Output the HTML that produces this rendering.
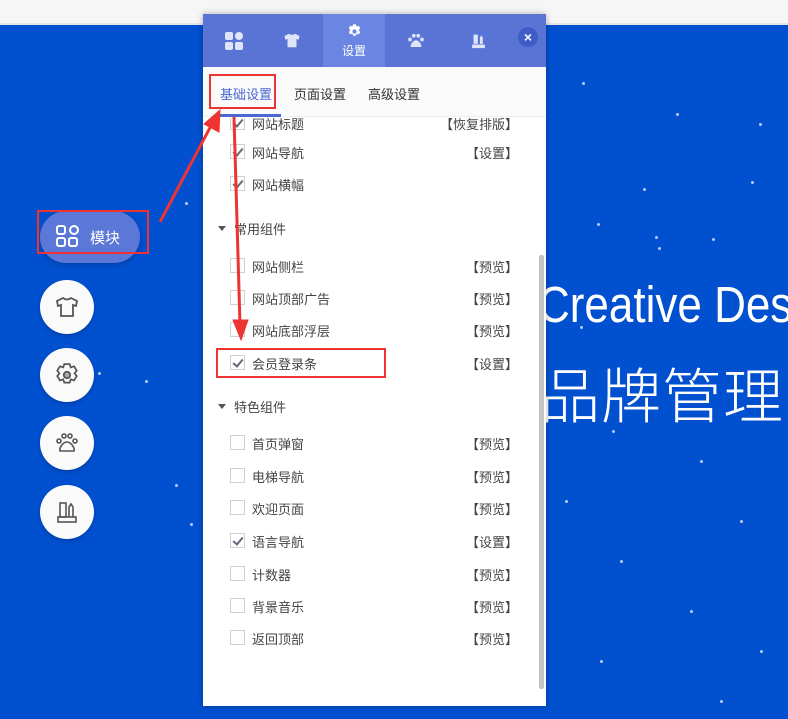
<!DOCTYPE html>
<html><head><meta charset="utf-8"><style>
*{margin:0;padding:0;box-sizing:border-box}
body{width:788px;height:719px;overflow:hidden;position:relative;background:#0050d0;font-family:"Liberation Sans","Noto Sans CJK SC",sans-serif}
.top{position:absolute;left:0;top:0;width:788px;height:25px;background:#f6f6f6;border-bottom:2px solid #e6e6e6}
.star{position:absolute;width:3px;height:3px;border-radius:50%;background:#b8c8f0}
.panel{position:absolute;left:203px;top:14px;width:343px;height:692px;background:#fff;box-shadow:0 0 6px rgba(0,0,0,.3)}
.hd{position:absolute;left:0;top:0;width:343px;height:53px;background:#5a74d6}
.tab{position:absolute;top:0;height:53px;width:62px;display:flex;align-items:center;justify-content:center;flex-direction:column}
.tab.act{background:#6b86e2;color:#fff;font-size:12px}
.close{position:absolute;left:315px;top:13px;width:20px;height:20px;border-radius:50%;background:#3f5cc8;color:#fff;font-size:14px;line-height:20px;text-align:center;font-weight:bold}
.tabs{position:absolute;left:0;top:53px;width:343px;height:50px;background:#fafafa;border-bottom:1px solid #eee;font-size:13px;color:#333}
.tabs span{position:absolute;top:17px}
.row{position:absolute;left:0;width:343px;height:20px;font-size:13px;color:#444}
.cb{position:absolute;left:27px;top:2px;width:15px;height:15px;border:1px solid #d0d0d0;background:#fff}
.cb.c:after{content:"";position:absolute;left:4px;top:1px;width:4px;height:8px;border:solid #667;border-width:0 2px 2px 0;transform:rotate(40deg)}
.row .t{position:absolute;left:49px;top:1px}
.row .r{position:absolute;right:28px;top:1px;color:#444}
.sec{position:absolute;left:15px;font-size:13px;color:#444}
.sec:before{content:"";display:inline-block;border:4px solid transparent;border-top:5px solid #555;margin-right:8px;vertical-align:-1px}
.sb{position:absolute;left:336px;top:241px;width:5px;height:434px;background:#c4c4c4;border-radius:2px}
.circ{position:absolute;left:40px;width:54px;height:54px;border-radius:50%;background:#fafafa;box-shadow:0 2px 5px rgba(0,0,0,.2);display:flex;align-items:center;justify-content:center}
.red{position:absolute;border:2px solid #ee3333}
.hero{position:absolute;left:530px;top:260px;width:258px;height:180px;overflow:hidden}
</style></head><body>
<div class="top"></div>
<div class="star" style="left:582px;top:82px"></div><div class="star" style="left:676px;top:113px"></div><div class="star" style="left:759px;top:123px"></div><div class="star" style="left:643px;top:188px"></div><div class="star" style="left:655px;top:236px"></div><div class="star" style="left:751px;top:181px"></div><div class="star" style="left:712px;top:238px"></div><div class="star" style="left:658px;top:247px"></div><div class="star" style="left:597px;top:223px"></div><div class="star" style="left:185px;top:202px"></div><div class="star" style="left:98px;top:372px"></div><div class="star" style="left:145px;top:380px"></div><div class="star" style="left:175px;top:484px"></div><div class="star" style="left:190px;top:523px"></div><div class="star" style="left:580px;top:326px"></div><div class="star" style="left:612px;top:430px"></div><div class="star" style="left:700px;top:460px"></div><div class="star" style="left:740px;top:520px"></div><div class="star" style="left:620px;top:560px"></div><div class="star" style="left:690px;top:610px"></div><div class="star" style="left:760px;top:650px"></div><div class="star" style="left:600px;top:660px"></div><div class="star" style="left:720px;top:700px"></div><div class="star" style="left:565px;top:500px"></div>
<div class="hero">
<div style="position:absolute;left:8px;top:17px;color:#fff;font-size:44px;white-space:nowrap;transform:scaleY(1.15);transform-origin:0 0">Creative Design</div>
<div style="position:absolute;left:10px;top:89px;color:#fff;font-size:60px;font-weight:300;white-space:nowrap;letter-spacing:1px;font-family:'Noto Sans CJK SC',sans-serif">品牌管理</div>
</div>

<div style="position:absolute;left:40px;top:211px;width:100px;height:52px;border-radius:26px;background:#5b78d8;box-shadow:0 2px 6px rgba(0,0,0,.2)"></div>
<svg style="position:absolute;left:56px;top:225px" width="23" height="23" viewBox="0 0 23 23" fill="none" stroke="#fff" stroke-width="2"><rect x="1" y="1" width="8" height="8" rx="2"/><circle cx="18" cy="5" r="4"/><rect x="1" y="13" width="8" height="8" rx="2"/><rect x="13" y="13" width="8" height="8" rx="2"/></svg>
<div style="position:absolute;left:90px;top:227px;color:#fff;font-size:15px">模块</div>
<div class="red" style="left:37px;top:210px;width:112px;height:44px"></div>

<div class="circ" style="top:280px"><svg width="24" height="22" viewBox="0 0 24 22" fill="none" stroke="#555" stroke-width="1.8"><path d="M8 2 L2 5 L3 10 L6 9 V20 H18 V9 L21 10 L22 5 L16 2 Q12 5 8 2Z"/></svg></div>
<div class="circ" style="top:348px"><svg width="26" height="26" viewBox="0 0 24 24" fill="none" stroke="#555" stroke-width="1.6"><path d="M9.5 2h5l1 3 3-1 2.5 4-2 2.5 2 2.5-2.5 4-3-1-1 3h-5l-1-3-3 1-2.5-4 2-2.5-2-2.5 2.5-4 3 1z"/><circle cx="12" cy="12" r="3" fill="#aab"/></svg></div>
<div class="circ" style="top:416px"><svg width="24" height="24" viewBox="0 0 24 24" fill="none" stroke="#555" stroke-width="1.6"><circle cx="4" cy="10" r="2"/><circle cx="9" cy="5" r="2"/><circle cx="15" cy="5" r="2"/><circle cx="20" cy="10" r="2"/><path d="M12 11c-4 0-8 6-7 9h14c1-3-3-9-7-9z"/></svg></div>
<div class="circ" style="top:485px"><svg width="24" height="24" viewBox="0 0 24 24" fill="none" stroke="#555" stroke-width="1.6"><rect x="3" y="17" width="18" height="5"/><rect x="5" y="3" width="6" height="14"/><path d="M14 17V7l2-3 2 3v10"/></svg></div>

<div class="panel">
 <div class="hd">
  <div class="tab" style="left:0"><svg width="18" height="18" viewBox="0 0 18 18" fill="#dfe4f8"><rect x="0" y="0" width="8" height="8" rx="2"/><rect x="10" y="0" width="8" height="8" rx="4"/><rect x="0" y="10" width="8" height="8" rx="2"/><rect x="10" y="10" width="8" height="8" rx="2"/></svg></div>
  <div class="tab" style="left:58px"><svg width="18" height="17" viewBox="0 0 24 22" fill="#dfe4f8"><path d="M8 2 L2 5 L3 10 L6 9 V20 H18 V9 L21 10 L22 5 L16 2 Q12 5 8 2Z"/></svg></div>
  <div class="tab act" style="left:120px"><svg width="17" height="17" viewBox="0 0 24 24" fill="#fff"><path d="M10 2h4l1 3 3-1 2 3-2 3 2 3-2 3-3-1-1 3h-4l-1-3-3 1-2-3 2-3-2-3 2-3 3 1z"/><circle cx="12" cy="12" r="3" fill="#6b86e2"/></svg><div style="margin-top:2px">设置</div></div>
  <div class="tab" style="left:182px"><svg width="18" height="18" viewBox="0 0 24 24" fill="#dfe4f8"><circle cx="4" cy="10" r="2.5"/><circle cx="9" cy="5" r="2.5"/><circle cx="15" cy="5" r="2.5"/><circle cx="20" cy="10" r="2.5"/><path d="M12 11c-4 0-8 6-7 9h14c1-3-3-9-7-9z"/></svg></div>
  <div class="tab" style="left:244px"><svg width="17" height="18" viewBox="0 0 24 24" fill="#dfe4f8"><rect x="3" y="17" width="18" height="5"/><rect x="5" y="3" width="6" height="13"/><path d="M14 16V7l2-3 2 3v9z"/></svg></div>
  <div class="close">×</div>
 </div>
 <div class="tabs">
  <span style="left:17px;color:#4a67d2">基础设置</span>
  <div style="position:absolute;left:12px;top:47px;width:66px;height:3px;background:#4a67d2"></div>
  <span style="left:91px">页面设置</span><span style="left:165px">高级设置</span>
 </div>
 <div style="position:absolute;left:0;top:104px;width:343px;height:580px;overflow:hidden">
  <div class="row" style="top:-5px"><div class="cb c"></div><span class="t">网站标题</span><span class="r">【恢复排版】</span></div>
 </div>
 <div class="row" style="top:128px"><div class="cb c"></div><span class="t">网站导航</span><span class="r">【设置】</span></div>
 <div class="row" style="top:160px"><div class="cb c"></div><span class="t">网站横幅</span></div>
 <div class="sec" style="top:205px">常用组件</div>
 <div class="row" style="top:242px"><div class="cb"></div><span class="t">网站侧栏</span><span class="r">【预览】</span></div>
 <div class="row" style="top:274px"><div class="cb"></div><span class="t">网站顶部广告</span><span class="r">【预览】</span></div>
 <div class="row" style="top:306px"><div class="cb"></div><span class="t">网站底部浮层</span><span class="r">【预览】</span></div>
 <div class="row" style="top:339px"><div class="cb c"></div><span class="t">会员登录条</span><span class="r">【设置】</span></div>
 <div class="sec" style="top:383px">特色组件</div>
 <div class="row" style="top:419px"><div class="cb"></div><span class="t">首页弹窗</span><span class="r">【预览】</span></div>
 <div class="row" style="top:452px"><div class="cb"></div><span class="t">电梯导航</span><span class="r">【预览】</span></div>
 <div class="row" style="top:484px"><div class="cb"></div><span class="t">欢迎页面</span><span class="r">【预览】</span></div>
 <div class="row" style="top:517px"><div class="cb c"></div><span class="t">语言导航</span><span class="r">【设置】</span></div>
 <div class="row" style="top:550px"><div class="cb"></div><span class="t">计数器</span><span class="r">【预览】</span></div>
 <div class="row" style="top:582px"><div class="cb"></div><span class="t">背景音乐</span><span class="r">【预览】</span></div>
 <div class="row" style="top:614px"><div class="cb"></div><span class="t">返回顶部</span><span class="r">【预览】</span></div>
 <div class="sb"></div>
</div>
<div class="red" style="left:209px;top:74px;width:67px;height:35px"></div>
<div class="red" style="left:216px;top:348px;width:170px;height:30px"></div>
<svg style="position:absolute;left:0;top:0" width="788" height="719" fill="#ee3333" stroke="#ee3333">
 <line x1="160" y1="222" x2="213" y2="122" stroke-width="3"/>
 <polygon points="220,110 219,132 204,124"/>
 <line x1="234" y1="117" x2="240" y2="325" stroke-width="3"/>
 <polygon points="241,340 233,320 248,320"/>
</svg>
</body></html>
